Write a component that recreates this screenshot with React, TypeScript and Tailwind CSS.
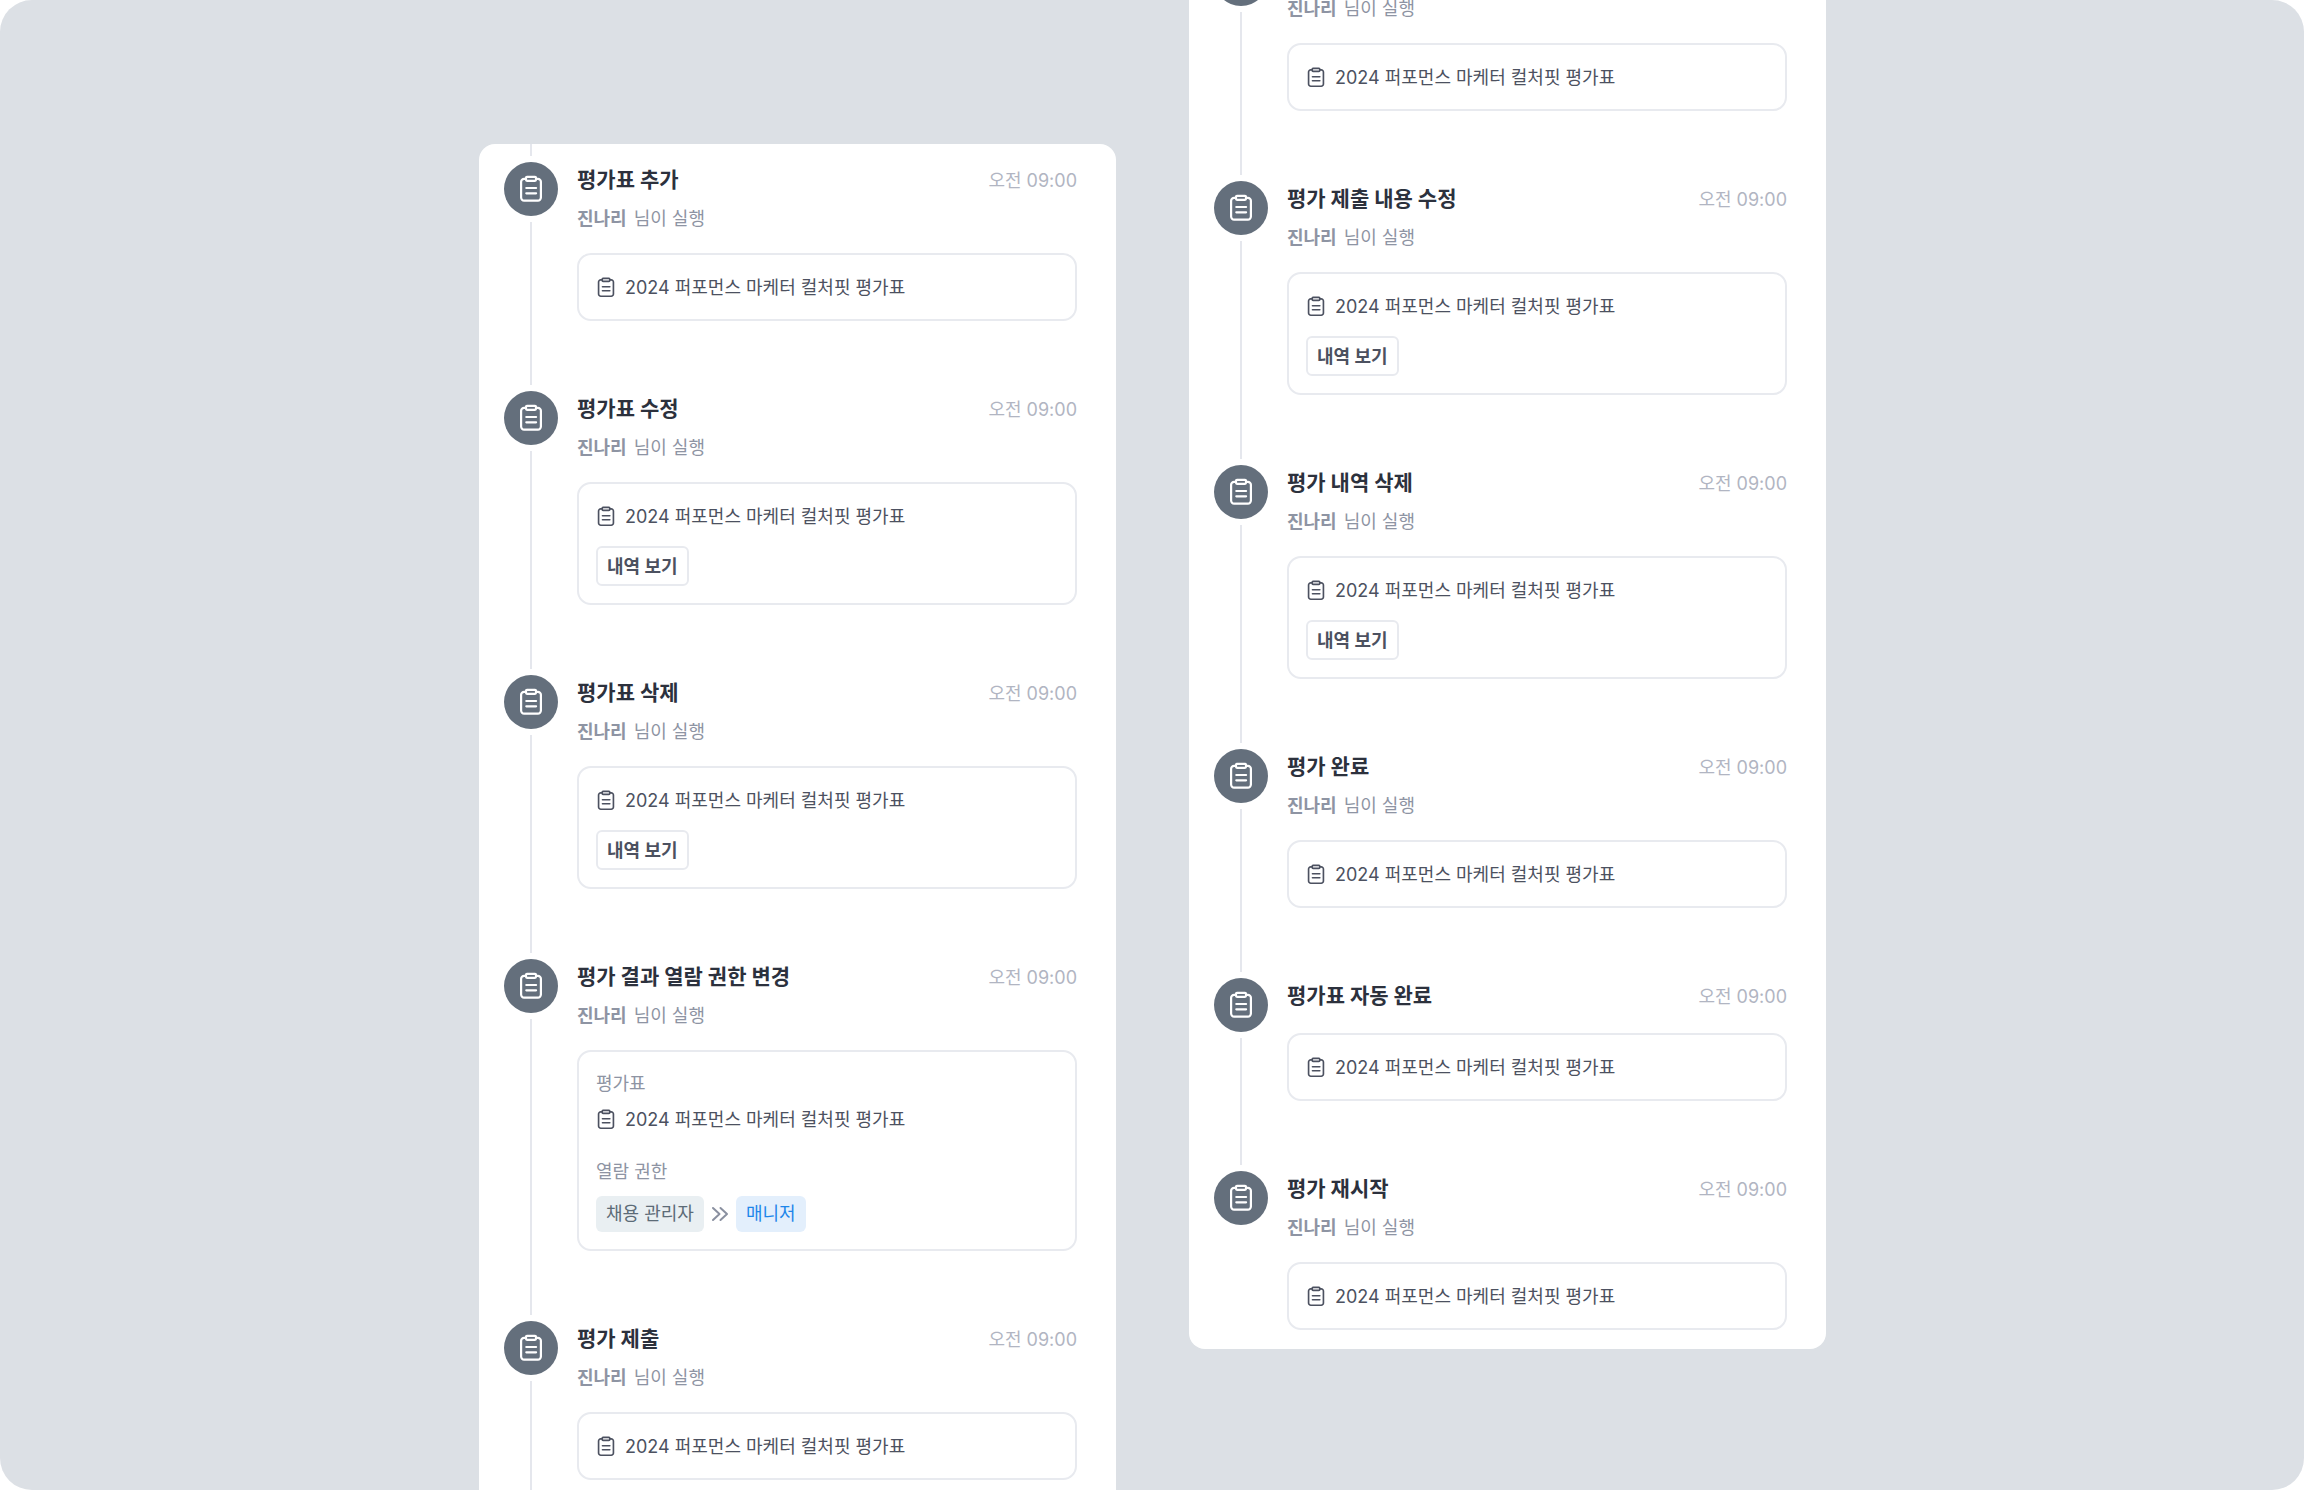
import React from 'react';

type Action = {
    id: number;
    title: string;
    actor?: string;
    kind: 'plain' | 'history' | 'permission';
};

const SHEET_NAME = '2024 퍼포먼스 마케터 컬처핏 평가표';

const sheetActions: Action[] = [
    { id: 1, title: '평가표 추가', actor: '진나리', kind: 'plain' },
    { id: 2, title: '평가표 수정', actor: '진나리', kind: 'history' },
    { id: 3, title: '평가표 삭제', actor: '진나리', kind: 'history' },
    { id: 4, title: '평가 결과 열람 권한 변경', actor: '진나리', kind: 'permission' },
    { id: 5, title: '평가 제출', actor: '진나리', kind: 'plain' },
];

const reviewActions: Action[] = [
    { id: 6, title: '평가 제출', actor: '진나리', kind: 'plain' },
    { id: 7, title: '평가 제출 내용 수정', actor: '진나리', kind: 'history' },
    { id: 8, title: '평가 내역 삭제', actor: '진나리', kind: 'history' },
    { id: 9, title: '평가 완료', actor: '진나리', kind: 'plain' },
    { id: 10, title: '평가표 자동 완료', kind: 'plain' },
    { id: 11, title: '평가 재시작', actor: '진나리', kind: 'plain' },
];

const ClipboardIcon: React.FC<{ className: string }> = ({ className }) => (
    <svg
        viewBox="0 0 24 28"
        fill="none"
        stroke="currentColor"
        strokeWidth="2.2"
        strokeLinecap="round"
        strokeLinejoin="round"
        className={className}
        aria-hidden="true"
    >
        <path d="M7 3.800H5.100a3 3 0 0 0-3 3V22.600a3 3 0 0 0 3 3h13.800a3 3 0 0 0 3-3V6.800a3 3 0 0 0-3-3H17" />
        <rect x="7" y="1.800" width="10" height="4" rx="1" />
        <path d="M7.300 13h9.800M7.300 18.300h9.800" />
    </svg>
);

const SheetRow: React.FC = () => (
    <div className="flex items-center gap-[10px] h-[30px] pl-px text-[#4c5160]">
        <ClipboardIcon className="w-[18px] h-[21px] shrink-0" />
        <span>{SHEET_NAME}</span>
    </div>
);

const PermissionDetail: React.FC = () => (
    <>
        <p className="mb-[5px] h-[30px] leading-[30px] text-[#8e94a3]">평가표</p>
        <SheetRow />
        <p className="mt-[23px] h-[30px] leading-[30px] text-[#8e94a3]">열람 권한</p>
        <div className="flex items-center mt-[9px]">
            <span className="h-9 px-[10px] leading-9 rounded-md bg-[#e9eff2] text-[#5c6b77]">채용 관리자</span>
            <svg
                viewBox="0 0 24 24"
                fill="none"
                stroke="currentColor"
                strokeWidth="2"
                strokeLinecap="round"
                strokeLinejoin="round"
                className="w-6 h-6 mx-1 text-[#8a90a0]"
                aria-hidden="true"
            >
                <path d="M5 6l6.500 6L5 18M12.500 6l6.500 6-6.500 6" />
            </svg>
            <span className="h-9 px-[10px] leading-9 rounded-md bg-[#e3effc] text-[#1e86ea]">매니저</span>
        </div>
    </>
);

const TimelineItem: React.FC<{ action: Action; isLast: boolean }> = ({ action, isLast }) => (
    <li className="flex gap-[19px]">
        <div className="flex flex-col items-center w-[54px] shrink-0">
            <span className="flex items-center justify-center w-[54px] h-[54px] rounded-full bg-[#646f7c] text-white">
                <ClipboardIcon className="w-6 h-7" />
            </span>
            {!isLast && <span className="flex-1 w-[2px] my-[6px] bg-[#e5e7ed]" />}
        </div>

        <div className={isLast ? 'flex-1 pb-[19px]' : 'flex-1 pb-[70px]'}>
            <div className="flex items-center justify-between h-9">
                <h3 className="text-[21px] font-bold text-[#2c313d]">{action.title}</h3>
                <time dateTime="09:00" className="text-[#b1b5c2]">오전 09:00</time>
            </div>
            {action.actor && (
                <p className="flex gap-[7px] mt-2 h-7 leading-[26px] text-[#8e94a3]">
                    <strong className="font-bold">{action.actor}</strong>
                    <span>님이 실행</span>
                </p>
            )}

            <div className="mt-[19px] p-[17px] border-2 border-[#e8eaef] rounded-[14px]">
                {action.kind === 'permission' ? <PermissionDetail /> : <SheetRow />}
                {action.kind === 'history' && (
                    <button
                        type="button"
                        className="block mt-[15px] h-10 px-[9px] border-2 border-[#e8eaef] rounded-md font-bold text-[#4c5160]"
                    >
                        내역 보기
                    </button>
                )}
            </div>
        </div>
    </li>
);

const Timeline: React.FC<{ actions: Action[]; ended?: boolean }> = ({ actions, ended = false }) => (
    <div className="pl-[25px] pr-[39px]">
        <div className="flex justify-center w-[54px] pb-[6px]">
            <span className="w-[2px] h-3 bg-[#e5e7ed]" />
        </div>
        <ol>
            {actions.map((action, index) => (
                <TimelineItem key={action.id} action={action} isLast={ended && index === actions.length - 1} />
            ))}
        </ol>
    </div>
);

export default function App() {
    return (
        <div className="h-screen bg-white">
            <main className="flex justify-center gap-[73px] h-full pl-px overflow-hidden rounded-[32px] bg-[#dce0e5] font-[Inter,'Noto_Sans_CJK_KR',sans-serif] text-[18px]">
                <section className="self-start flex-1 max-w-[637px] mt-36 bg-white rounded-2xl">
                    <Timeline actions={sheetActions} />
                </section>
                <section className="self-end flex-1 max-w-[637px] mb-[141px] bg-white rounded-2xl">
                    <Timeline actions={reviewActions} ended />
                </section>
            </main>
        </div>
    );
}
